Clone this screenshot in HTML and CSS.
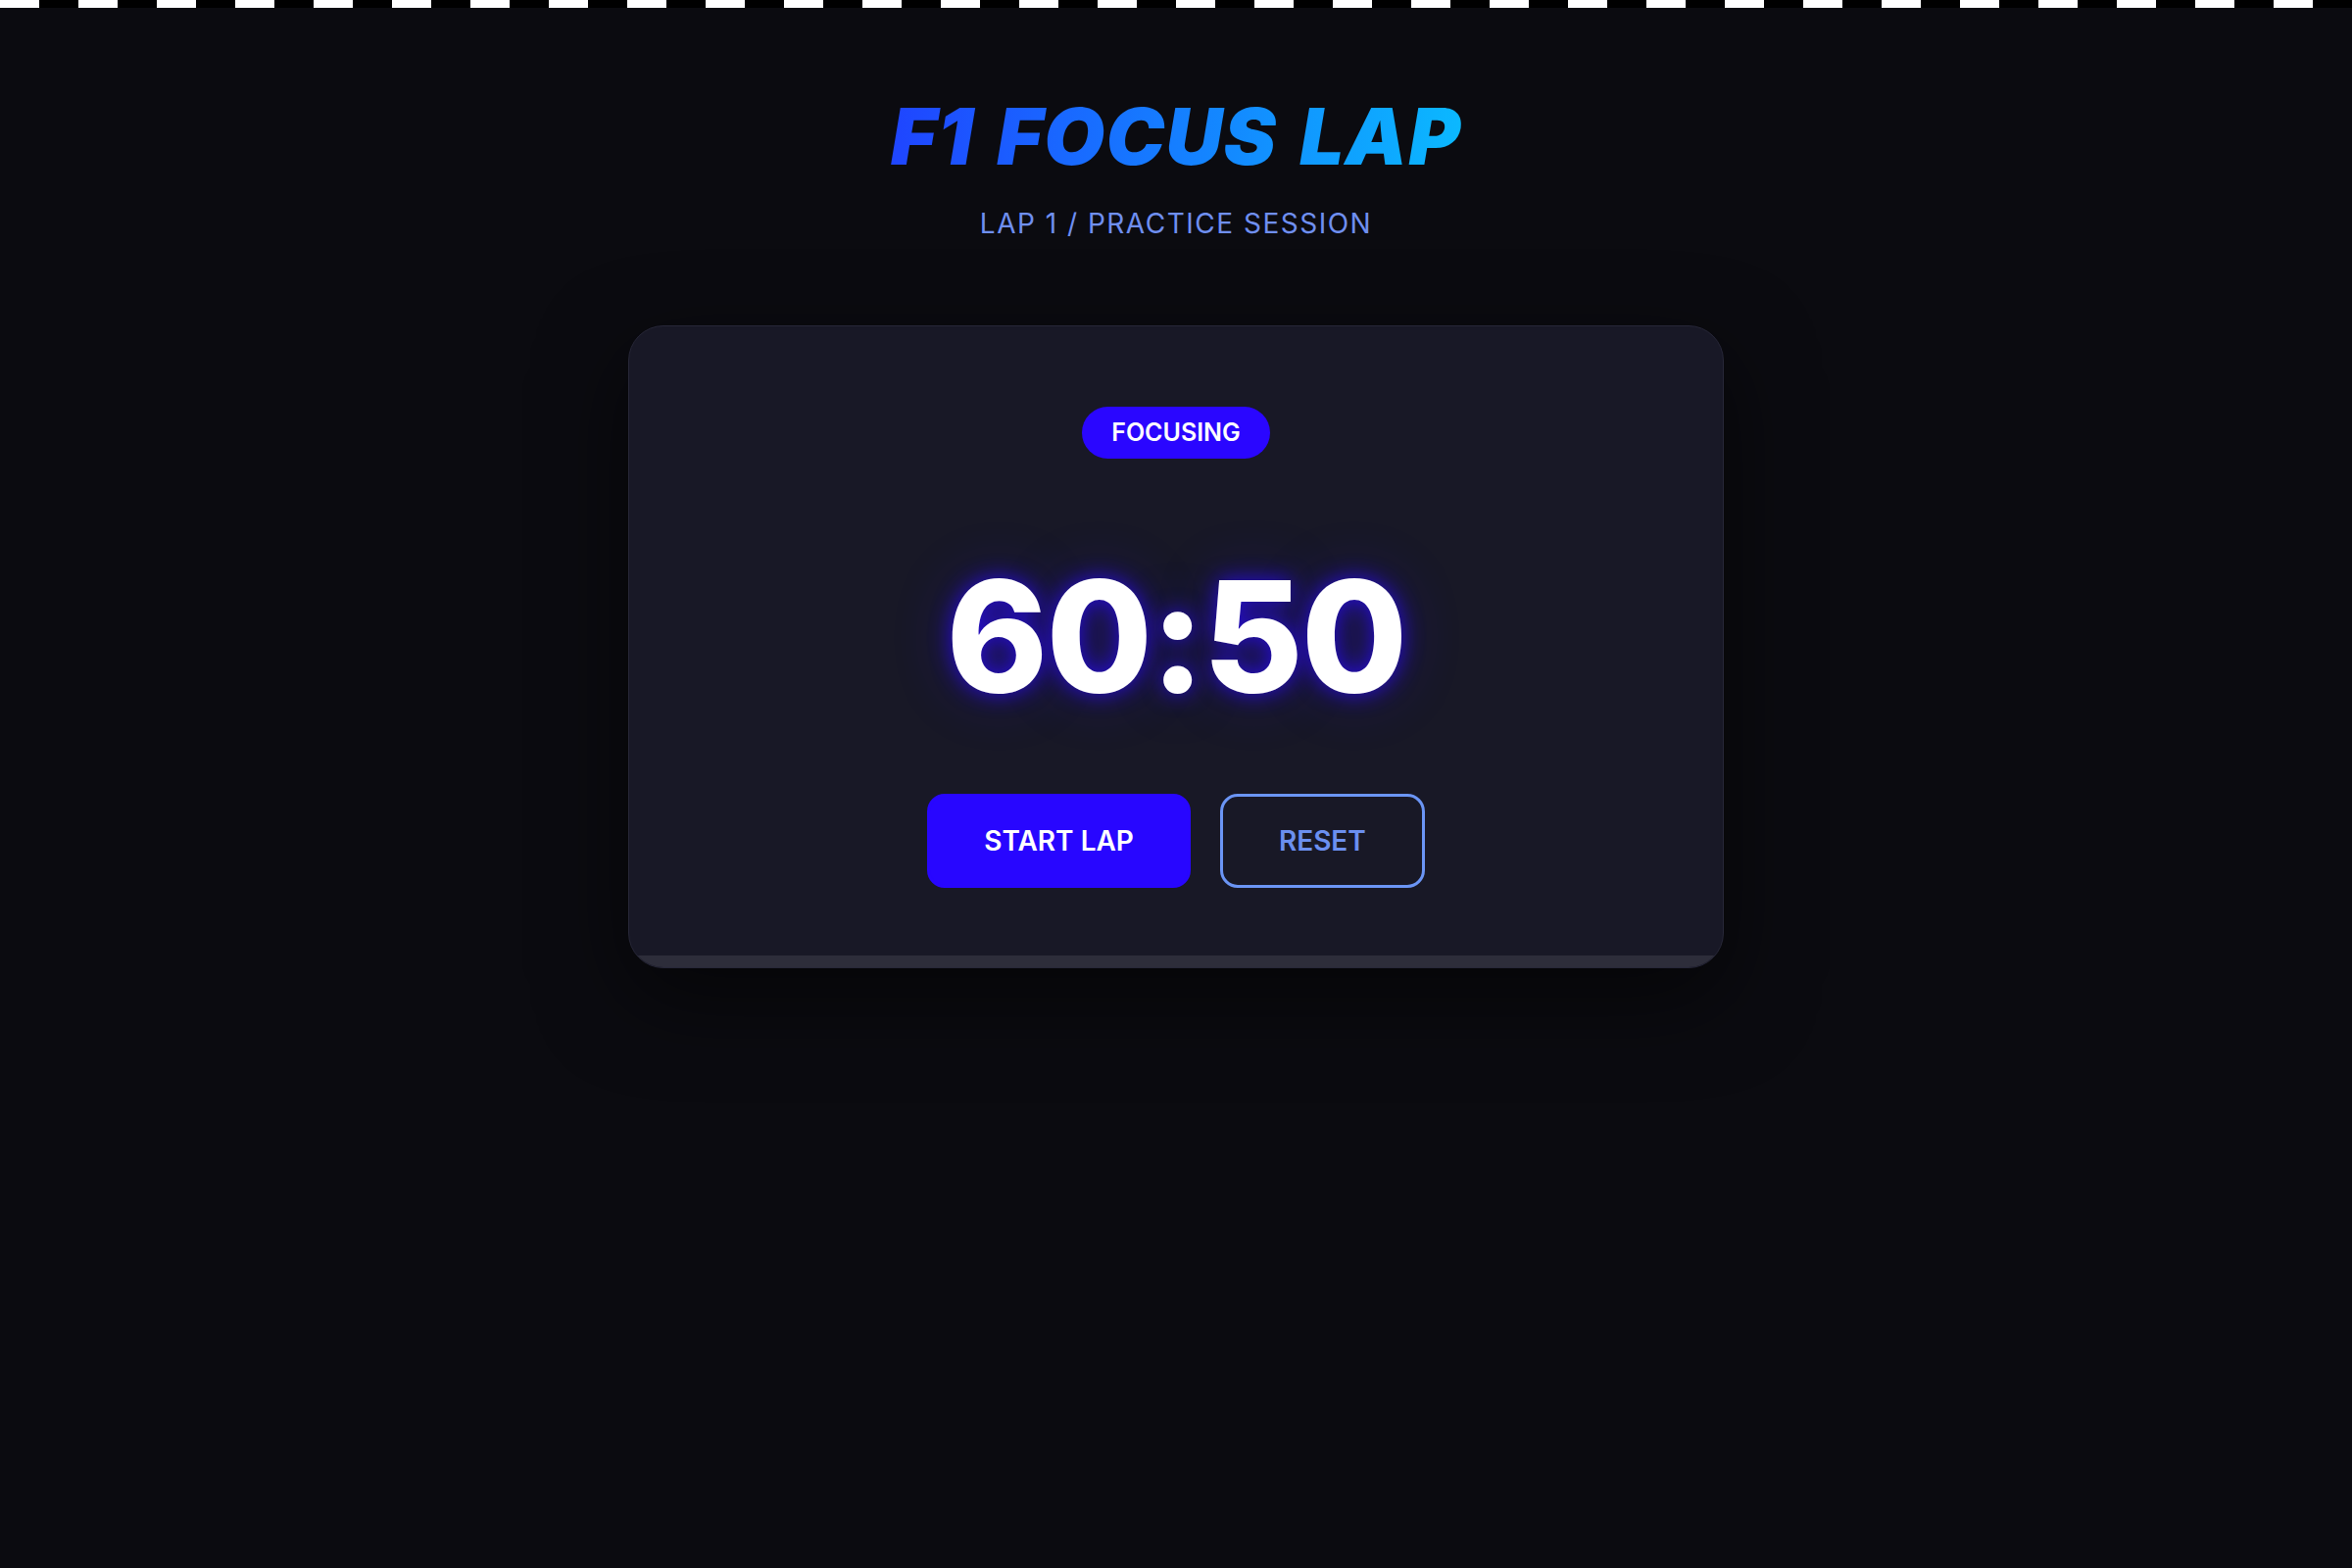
FILE: index.html
```html
<!DOCTYPE html>
<html lang="en">
<head>
<meta charset="utf-8">
<title>F1 Focus Lap</title>
<link rel="stylesheet" href="styles.css">
</head>
<body>
<div class="checker"></div>
<header class="header">
  <h1 class="title">F1 FOCUS LAP</h1>
  <p class="subtitle">LAP 1 / PRACTICE SESSION</p>
</header>
<main class="card">
  <div class="card-body">
    <span class="badge">FOCUSING</span>
    <div class="timer">60:50</div>
    <div class="controls">
      <button class="btn btn-primary">START LAP</button>
      <button class="btn btn-outline">RESET</button>
    </div>
  </div>
  <div class="track"><div class="track-fill"></div></div>
</main>
</body>
</html>
```

FILE: styles.css
```css
* { box-sizing: border-box; }
html, body {
  margin: 0;
  padding: 0;
}
body {
  background: #0b0b10;
  min-height: 100vh;
  font-family: "Inter", "Noto Sans", sans-serif;
  color: #fff;
}
.checker {
  height: 8px;
  background: repeating-linear-gradient(90deg, #ffffff 0 40px, #000000 40px 80px);
}
.header {
  padding-top: 83px;
  text-align: center;
}
.title {
  margin: 0;
  font-size: 80px;
  line-height: 1.2;
  font-weight: 900;
  font-style: italic;
  letter-spacing: 1.2px;
  word-spacing: 6px;
  background: linear-gradient(90deg, #1f45ff 0%, #0bb8ff 100%);
  -webkit-background-clip: text;
  background-clip: text;
  color: transparent;
  display: inline-block;
}
.subtitle {
  margin: 25px 0 0;
  font-size: 28px;
  line-height: 1.2;
  font-weight: 400;
  letter-spacing: 1.5px;
  color: #6f8ff0;
}
.card {
  width: 1118px;
  margin: 86px auto 0;
  background: #181826;
  border: 1px solid #272738;
  border-radius: 36px;
  overflow: hidden;
  box-shadow: 0 30px 90px rgba(0, 0, 0, 0.55);
}
.card-body {
  display: flex;
  flex-direction: column;
  align-items: center;
  padding-top: 82px;
}
.badge {
  display: inline-block;
  height: 53px;
  line-height: 53px;
  padding: 0 30px;
  border-radius: 27px;
  background: #2a06ff;
  color: #fff;
  font-size: 25px;
  font-weight: 600;
}
.timer {
  margin-top: 103px;
  font-size: 157px;
  line-height: 1;
  font-weight: 800;
  color: #ffffff;
  letter-spacing: -2px;
  text-shadow: 0 0 22px rgba(43, 10, 255, 0.8), 0 0 60px rgba(43, 10, 255, 0.3);
}
.controls {
  display: flex;
  gap: 30px;
  margin-top: 82px;
  margin-bottom: 69px;
}
.btn {
  height: 96px;
  border-radius: 18px;
  font-family: "Inter", "Noto Sans", sans-serif;
  font-size: 28px;
  font-weight: 600;
  cursor: pointer;
}
.btn-primary {
  padding: 0 55px;
  background: #2806ff;
  border: 3px solid #2806ff;
  color: #ffffff;
}
.btn-outline {
  padding: 0 57px;
  background: transparent;
  border: 3px solid #6b95f5;
  color: #6b8ff0;
}
.track {
  height: 12px;
  background: #2d2d3a;
}
.track-fill {
  height: 100%;
  width: 0;
  background: #2806ff;
}
```
